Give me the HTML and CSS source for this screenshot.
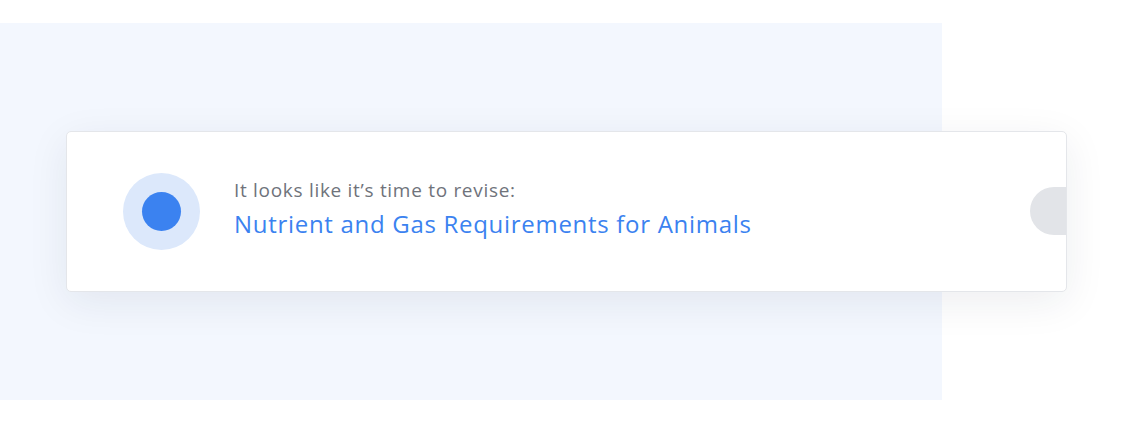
FILE: index.html
```html
<!DOCTYPE html>
<html lang="en">
<head>
<meta charset="utf-8">
<link rel="stylesheet" href="styles.css">
</head>
<body>
<div class="panel">
  <div class="card">
    <div class="dot-ring"><div class="dot"></div></div>
    <div class="text">
      <div class="eyebrow">It looks like it’s time to revise:</div>
      <div class="title">Nutrient and Gas Requirements for Animals</div>
    </div>
    <div class="pill"></div>
  </div>
</div>
</body>
</html>
```
FILE: styles.css
```css
html, body {
  margin: 0;
  padding: 0;
  background: #ffffff;
}
body {
  font-family: "Open Sans", "Noto Sans", sans-serif;
}
.panel {
  margin-top: 23px;
  width: 942px;
  height: 377px;
  background: #f3f7fe;
  padding: 108px 0 0 66px;
  box-sizing: border-box;
}
.card {
  position: relative;
  width: 1001px;
  height: 161px;
  box-sizing: border-box;
  background: #ffffff;
  border: 1px solid #e4e6ea;
  border-radius: 5px;
  box-shadow: 0 10px 40px rgba(30, 40, 70, 0.08);
  display: flex;
  align-items: center;
  padding-left: 56px;
  overflow: hidden;
}
.dot-ring {
  width: 77px;
  height: 77px;
  border-radius: 50%;
  background: #dce8fb;
  display: flex;
  align-items: center;
  justify-content: center;
  flex: none;
}
.dot {
  width: 39px;
  height: 39px;
  border-radius: 50%;
  background: #3b82f0;
}
.text {
  margin-left: 34px;
  margin-bottom: 6px;
  display: flex;
  flex-direction: column;
  gap: 7px;
  letter-spacing: 0.7px;
}
.eyebrow {
  font-size: 19px;
  color: #6f737b;
  line-height: 24px;
}
.title {
  font-size: 24px;
  color: #3b82f0;
  line-height: 30px;
}
.pill {
  position: absolute;
  right: -44px;
  top: 55px;
  width: 80px;
  height: 48px;
  border-radius: 24px;
  background: #e2e4e8;
}
```
